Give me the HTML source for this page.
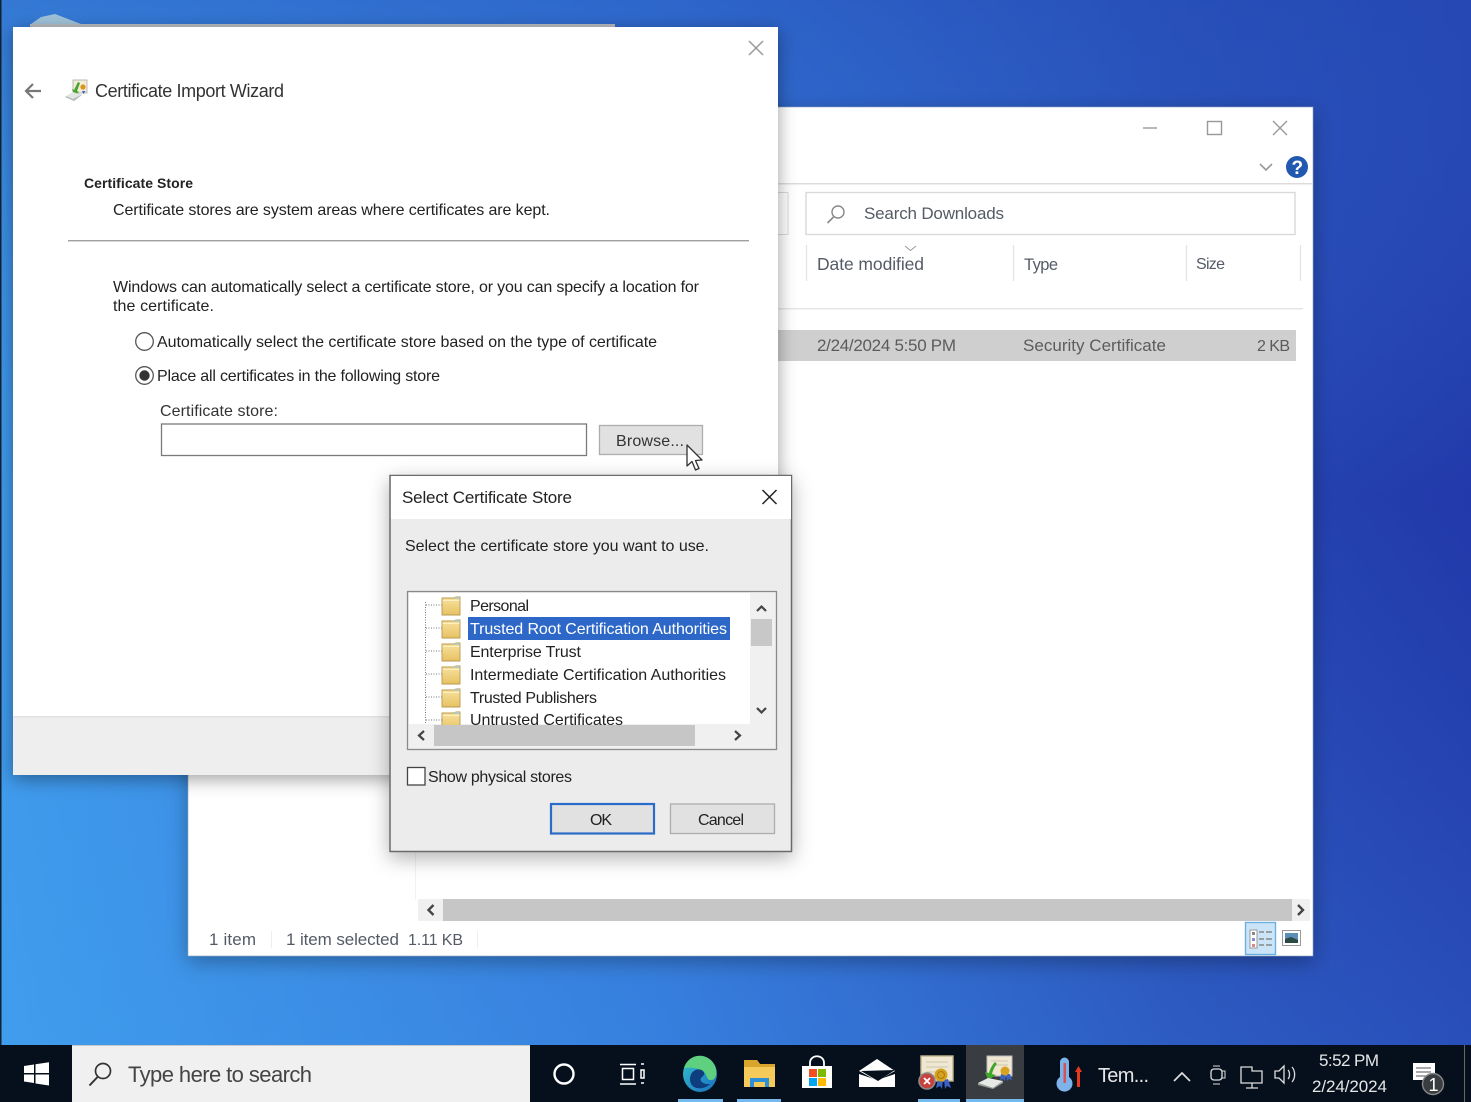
<!DOCTYPE html>
<html lang="en"><head><meta charset="utf-8"><title>Certificate Import Wizard</title>
<style>
html,body{margin:0;padding:0;width:1471px;height:1102px;overflow:hidden;background:#2b5cc8}
svg{display:block;position:absolute;left:0;top:0;filter:blur(.3px)}
text{font-family:"Liberation Sans",sans-serif;font-size:16px;fill:#222}
.g{fill:#5c5c5c}.h{fill:#555b66}.b{fill:#333}
</style></head><body>
<svg width="1471" height="1102" viewBox="0 0 1471 1102" xmlns="http://www.w3.org/2000/svg">
<defs>
<linearGradient id="bg1" x1="0" y1="0" x2="1" y2="0"><stop offset="0" stop-color="#3f9bec"/><stop offset=".45" stop-color="#3272d6"/><stop offset=".8" stop-color="#2440ae"/><stop offset="1" stop-color="#1f2fa4"/></linearGradient>
<linearGradient id="bg2" x1="0" y1="0" x2="0" y2="1"><stop offset="0" stop-color="#2a5cc0" stop-opacity=".55"/><stop offset=".45" stop-color="#3d8fe6" stop-opacity=".1"/><stop offset="1" stop-color="#44a4f2" stop-opacity=".3"/></linearGradient>
<linearGradient id="fold" x1="0" y1="0" x2="0" y2="1"><stop offset="0" stop-color="#f8e3a0"/><stop offset="1" stop-color="#e6c163"/></linearGradient>
<linearGradient id="edge" x1="0" y1="0" x2="1" y2="1"><stop offset="0" stop-color="#35c1c9"/><stop offset="1" stop-color="#1a6fc4"/></linearGradient>
<filter id="sh" x="-10%" y="-10%" width="120%" height="120%"><feDropShadow dx="0" dy="4" stdDeviation="9" flood-color="#000" flood-opacity=".38"/></filter>
<filter id="sh2" x="-20%" y="-20%" width="140%" height="140%"><feDropShadow dx="0" dy="6" stdDeviation="10" flood-color="#000" flood-opacity=".3"/></filter>
<g id="folder"><path d="M1 3h12l2-1h4v18H1z" fill="url(#fold)" stroke="#b99a4e" stroke-width=".9"/><path d="M1.500 5.500h17" stroke="#fff0c0"/><rect x="14" y="2" width="4" height="2" fill="#a9ccd2"/></g>
</defs>
<rect width="1471" height="1102" fill="url(#bg1)"/>
<rect width="1471" height="1102" fill="url(#bg2)"/>
<rect x="0" y="0" width="1.500" height="1046" fill="#123"/>

<!-- behind window top strip -->
<path d="M31 24l10-7 14-3 26 10z" fill="#9fc2d8"/>
<rect x="30" y="24" width="585" height="4" fill="#b9bdc2"/>

<!-- explorer -->
<rect x="188" y="107" width="1125" height="849" fill="#fff" stroke="#8da0b8" stroke-width=".6" filter="url(#sh2)"/>
<path d="M1143 128h14" stroke="#999" stroke-width="1.400"/>
<rect x="1207.500" y="121.500" width="14" height="13" fill="none" stroke="#999" stroke-width="1.400"/>
<path d="M1273 121l14 14M1287 121l-14 14" stroke="#999" stroke-width="1.400"/>
<path d="M1260 164l6 6 6-6" fill="none" stroke="#999" stroke-width="1.600"/>
<circle cx="1297" cy="167" r="11" fill="#2159b0"/>
<text x="1291.500" y="174" style="font-size:19px;font-weight:bold;fill:#fff">?</text>
<rect x="778" y="183" width="535" height="1.500" fill="#dcdcdc"/>
<rect x="770" y="192.500" width="18" height="42" fill="#fff" stroke="#dadada"/>
<rect x="806" y="192.500" width="489" height="42" fill="#fff" stroke="#d9d9d9" stroke-width="1.400"/>
<circle cx="838" cy="212" r="6" fill="none" stroke="#888" stroke-width="1.400"/><path d="M833.500 217l-6 6" stroke="#888" stroke-width="1.600"/>
<text x="864" y="219" textLength="140" class="h" style="font-size:17px">Search Downloads</text>
<path d="M905 246l5.500 4.500 5.500-4.500" fill="none" stroke="#999" stroke-width="1"/>
<path d="M806.500 245v36M1013.500 245v36M1186.500 245v36M1300.500 245v36" stroke="#e4e4e4" stroke-width="1.300"/>
<text x="817" y="270" textLength="107" class="h" style="font-size:17.500px">Date modified</text>
<text x="1024" y="270" textLength="34" class="h" style="font-size:16.500px">Type</text>
<text x="1196" y="269" textLength="29" class="h" style="font-size:16px">Size</text>
<rect x="778" y="308" width="525" height="1.500" fill="#e6e6e6"/>
<rect x="778" y="330" width="518" height="31" fill="#cfcfcf"/>
<text x="817" y="351" textLength="139" class="g" style="font-size:17px">2/24/2024 5:50 PM</text>
<text x="1023" y="351" textLength="143" class="g" style="font-size:17px">Security Certificate</text>
<text x="1257" y="351" textLength="33" class="g" style="font-size:16px">2 KB</text>
<rect x="415" y="775" width="1" height="125" fill="#f2f2f2"/>
<rect x="418" y="899" width="892" height="22" fill="#f0f0f0"/>
<rect x="443" y="899" width="849" height="22" fill="#c6c6c6"/>
<path d="M433.500 905l-5 5 5 5M1298 905l5 5-5 5" fill="none" stroke="#444" stroke-width="2.400"/>
<text x="209" y="945" textLength="47" class="h" style="font-size:17px">1 item</text>
<rect x="271" y="931" width="1" height="17" fill="#eee"/>
<text x="286" y="945" textLength="113" class="h" style="font-size:17px">1 item selected</text>
<text x="408" y="945" textLength="55" class="h" style="font-size:16px">1.11 KB</text>
<rect x="477" y="931" width="1" height="17" fill="#eee"/>
<rect x="1245.500" y="922.500" width="30" height="32" fill="#cce4f7" stroke="#6cb0e0" stroke-width="1.400"/>
<rect x="1250" y="930" width="7" height="18" fill="#fff" stroke="#999"/>
<rect x="1252" y="932" width="3" height="3" fill="#888"/><rect x="1252" y="938" width="3" height="3" fill="#8a8ad8"/><rect x="1252" y="944" width="3" height="3" fill="#d88a8a"/>
<path d="M1259 932h5M1266 932h6M1259 939h5M1266 939h6M1259 945h5M1266 945h6" stroke="#777" stroke-width="1.300"/>
<rect x="1282.500" y="930.500" width="18" height="15" fill="#fff" stroke="#999"/>
<rect x="1285" y="933" width="13" height="10" fill="#5c8fb5"/><path d="M1285 943v-4l6-2 7 3v3z" fill="#2c4a44"/>

<!-- wizard -->
<g filter="url(#sh)"><rect x="13" y="27" width="765" height="748" fill="#fff"/></g>
<rect x="13" y="716" width="765" height="59" fill="#eeeeee"/>
<rect x="13" y="716" width="765" height="1.500" fill="#e2e2e2"/>
<path d="M749 41l14 14M763 41l-14 14" stroke="#999" stroke-width="1.500"/>
<path d="M41 91H26M33 84l-7 7 7 7" fill="none" stroke="#777" stroke-width="2.200"/>
<g transform="translate(64,78)"><rect x="9" y="2" width="14" height="13" fill="#f3ecd8" stroke="#aaa" stroke-width=".8"/><circle cx="19" cy="9" r="2.600" fill="#d9951a"/><path d="M18 13l1.500 3 2-3" fill="#3a62c2"/><path d="M14 4l-4 8-2-1 2 6 5-3-2-1 3-8z" fill="#46a52f"/><path d="M1 19l8-5 9 3-8 6z" fill="#b4bab6"/><path d="M2 18l7-4 8 3-8 4z" fill="#e3e7e4"/></g>
<text x="95" y="97" textLength="189" style="font-size:18px;fill:#333">Certificate Import Wizard</text>
<text x="84" y="188" textLength="109" style="font-size:14px;font-weight:bold">Certificate Store</text>
<text x="113" y="215" textLength="437">Certificate stores are system areas where certificates are kept.</text>
<rect x="68" y="240" width="681" height="1.400" fill="#a0a0a0"/>
<text x="113" y="292" textLength="586">Windows can automatically select a certificate store, or you can specify a location for</text>
<text x="113" y="311" textLength="101">the certificate.</text>
<circle cx="144.500" cy="341.500" r="8.800" fill="#fff" stroke="#555" stroke-width="1.300"/>
<text x="157" y="347" textLength="500">Automatically select the certificate store based on the type of certificate</text>
<circle cx="144.500" cy="375.500" r="8.800" fill="#fff" stroke="#555" stroke-width="1.300"/>
<circle cx="144.500" cy="375.500" r="5.200" fill="#333"/>
<text x="157" y="381" textLength="283">Place all certificates in the following store</text>
<text x="160" y="416" textLength="118" class="b">Certificate store:</text>
<rect x="161.500" y="424" width="425" height="31.500" fill="#fff" stroke="#7a7a7a" stroke-width="1.300"/>
<rect x="599.500" y="425.500" width="103" height="29" fill="#e1e1e1" stroke="#adadad" stroke-width="1.300"/>
<text x="616" y="446" textLength="68" class="b">Browse...</text>

<!-- cursor -->
<path d="M687 445v21l5-4.500 3.500 8.500 3.500-1.500-3.500-8 6.500-.5z" fill="#fff" stroke="#333" stroke-width="1.300" stroke-linejoin="round"/>

<!-- dialog -->
<g filter="url(#sh2)"><rect x="390" y="475.500" width="401.500" height="376" fill="#ececec" stroke="#6a6a6a" stroke-width="1.500"/></g>
<rect x="391" y="476" width="400" height="43" fill="#fff"/>
<text x="402" y="503" textLength="170" style="font-size:17px;fill:#222">Select Certificate Store</text>
<path d="M762.500 490l14 14M776.500 490l-14 14" stroke="#222" stroke-width="1.500"/>
<text x="405" y="551" textLength="304">Select the certificate store you want to use.</text>
<rect x="407.500" y="591.500" width="369" height="158" fill="#f0f0f0" stroke="#8a8a8a" stroke-width="1.300"/>
<rect x="409" y="593" width="341" height="131" fill="#fff"/>
<path d="M425.500 602v122" stroke="#777" stroke-dasharray="1 1.500"/>
<path d="M426 605h17M426 628h17M426 651h17M426 674h17M426 697h17M426 720h17" stroke="#777" stroke-dasharray="1 1.500"/>
<use href="#folder" x="441" y="595"/>
<use href="#folder" x="441" y="618"/>
<use href="#folder" x="441" y="641"/>
<use href="#folder" x="441" y="664"/>
<use href="#folder" x="441" y="687"/>
<svg x="409" y="593" width="341" height="131"><use href="#folder" x="32" y="117"/>
<text x="61" y="132" textLength="153">Untrusted Certificates</text></svg>
<rect x="468" y="617" width="262" height="23" fill="#2d68c8"/>
<text x="470" y="611" textLength="59">Personal</text>
<text x="470" y="634" textLength="257" style="fill:#fff">Trusted Root Certification Authorities</text>
<text x="470" y="657" textLength="111">Enterprise Trust</text>
<text x="470" y="680" textLength="256">Intermediate Certification Authorities</text>
<text x="470" y="703" textLength="127">Trusted Publishers</text>
<rect x="751" y="619" width="21" height="27" fill="#c8c8c8"/>
<path d="M757 611l4.500-4.500 4.500 4.500M757 708l4.500 4.500 4.500-4.500" fill="none" stroke="#444" stroke-width="2.200"/>
<rect x="434" y="725" width="261" height="21" fill="#c6c6c6"/>
<path d="M424 731l-5 4.500 5 4.500M735 731l5 4.500-5 4.500" fill="none" stroke="#444" stroke-width="2.200"/>
<rect x="407.500" y="767.500" width="17.500" height="17.500" fill="#fff" stroke="#444" stroke-width="1.300"/>
<text x="428" y="782" textLength="144">Show physical stores</text>
<rect x="551" y="804" width="103" height="29.500" fill="#e1e1e1" stroke="#2b6bc9" stroke-width="2.200"/>
<text x="590" y="825" textLength="22">OK</text>
<rect x="670.500" y="804" width="104" height="29.500" fill="#e1e1e1" stroke="#adadad" stroke-width="1.300"/>
<text x="698" y="825" textLength="46">Cancel</text>

<!-- taskbar -->
<rect x="0" y="1045" width="1471" height="57" fill="#06101c"/>
<rect x="72" y="1045" width="458" height="57" fill="#f0f0f0"/>
<rect x="72" y="1045" width="458" height="1" fill="#c8c8c8"/>
<path d="M24 1066l10-1.500V1073H24zM35.500 1064.300l13.500-2V1073H35.500zM24 1074.500h10v8.500l-10-1.500zM35.500 1074.500H49v11l-13.500-2z" fill="#fff"/>
<circle cx="103" cy="1071" r="7.500" fill="none" stroke="#333" stroke-width="1.700"/><path d="M97.500 1077l-8 8.500" stroke="#333" stroke-width="2"/>
<text x="128" y="1082" textLength="184" style="font-size:22px;fill:#444">Type here to search</text>
<circle cx="564" cy="1074" r="9.500" fill="none" stroke="#fff" stroke-width="2.400"/>
<path d="M620 1064.500h16M620 1084h16M622.500 1068.500h11v11h-11z" fill="none" stroke="#fff" stroke-width="1.500"/><path d="M641 1064h3M641 1070h3v8h-3zM641 1083h3" fill="none" stroke="#fff" stroke-width="1.500"/>
<!-- edge -->
<ellipse cx="700" cy="1074" rx="17" ry="18" fill="url(#edge)"/>
<path d="M684 1068c5-16 25-16 31-2 2 5 2 13-3 14-6 1-4-5-9-9-5-3-13-4-19-3z" fill="#5fd07f"/>
<path d="M690 1079c0-8 8-12 13-8 3 3 0 5-2 7-2 3 3 7 9 6-5 6-20 7-20-5z" fill="#0e3e7d"/>
<!-- explorer -->
<path d="M744 1060h13l3 4h15v23h-31z" fill="#f4cb5a"/><path d="M744 1060h13l3 4h15v3h-31z" fill="#d9a52c"/>
<path d="M750 1087v-9h19v9h-4v-5h-11v5z" fill="#2d8fd6"/>
<!-- store -->
<path d="M802 1066h30v22h-30z" fill="#fff"/><path d="M810 1066v-3c0-9 14-9 14 0v3" fill="none" stroke="#fff" stroke-width="1.800"/>
<rect x="809" y="1069" width="8" height="8" fill="#f25022"/><rect x="818" y="1069" width="8" height="8" fill="#7fba00"/><rect x="809" y="1078" width="8" height="8" fill="#00a4ef"/><rect x="818" y="1078" width="8" height="8" fill="#ffb900"/>
<!-- mail -->
<path d="M859 1071l18-12 18 12-18 10z" fill="#fff"/><path d="M859 1074l18 6 18-6v13h-36z" fill="#fff"/><path d="M861 1071l34-1-17 11z" fill="#06101c"/>
<!-- cert x -->
<rect x="921" y="1056" width="32" height="25" fill="#efe7d2" stroke="#c2b48e" stroke-width="1.400"/><path d="M926 1062h22M926 1067h22M926 1072h10" stroke="#cfc6ae"/>
<path d="M938 1079l-2 9 4-2 2 3 1-9zM944 1080l1 9 2-3 4 2-3-9z" fill="#3a62c2"/>
<circle cx="941" cy="1075" r="6.500" fill="#d7a21f"/><circle cx="941" cy="1075" r="3.500" fill="none" stroke="#a77a10"/>
<circle cx="927" cy="1081" r="8" fill="#c9413c" stroke="#8a8a8a" stroke-width="1.600"/><path d="M924 1078l6 6M930 1078l-6 6" stroke="#fff" stroke-width="1.800"/>
<!-- active cert -->
<rect x="966" y="1045" width="58" height="57" fill="#393c40"/>
<rect x="987" y="1056" width="25" height="20" fill="#efe7d2" stroke="#bbb"/><path d="M991 1061h17M995 1065h13" stroke="#cfc6ae"/>
<path d="M1001 1074l-1 6 3-1 2 2 1-7zM1006 1074l1 7 2-2 3 1-2-6z" fill="#3a62c2"/><circle cx="1005" cy="1071" r="4.500" fill="#d7a21f"/>
<path d="M995 1062c-3 3-5 7-6 11l-4-1 3 8 8-5-4-1c1-4 3-8 5-10z" fill="#3ea62b"/>
<path d="M978 1083l10-5 15 3-10 7z" fill="#e6e9e6"/><path d="M978 1083l15 5 10-7v2l-10 6-15-4z" fill="#9aa09b"/>
<!-- indicators -->
<rect x="678" y="1099" width="45" height="3" fill="#76b9ed"/><rect x="737" y="1099" width="44" height="3" fill="#76b9ed"/><rect x="918" y="1099" width="42" height="3" fill="#76b9ed"/><rect x="966" y="1099" width="58" height="3" fill="#76b9ed"/>
<!-- tray -->
<path d="M1060 1062a4.500 4.500 0 0 1 9 0v15a8 8 0 1 1-9 0z" fill="#7db2ea"/><rect x="1063.500" y="1063" width="2.500" height="20" fill="#d65353"/>
<path d="M1075 1072l3.500-6 3.500 6h-2v15h-3v-15z" fill="#e8391f"/>
<text x="1098" y="1082" textLength="51" style="font-size:20px;fill:#e6e6e6">Tem...</text>
<path d="M1174 1081l8-8 8 8" fill="none" stroke="#ddd" stroke-width="1.700"/>
<rect x="1211" y="1069" width="11" height="11" rx="3" fill="none" stroke="#ddd" stroke-width="1.300"/><rect x="1222" y="1071" width="3" height="7" fill="none" stroke="#ddd"/><path d="M1213 1066h7M1213 1084h7" stroke="#ddd"/>
<path d="M1241 1067h11v4h10v12h-21zM1252 1083v5M1246 1088h12" fill="none" stroke="#ddd" stroke-width="1.300"/>
<path d="M1275 1071h4l5-5v17l-5-5h-4zM1288 1070c2 2 2 7 0 9M1292 1067c3.500 4 3.500 11 0 15" fill="none" stroke="#ddd" stroke-width="1.300"/>
<text x="1319" y="1066" textLength="60" style="font-size:17px;fill:#e6e6e6">5:52 PM</text>
<text x="1312" y="1092" textLength="75" style="font-size:17px;fill:#e6e6e6">2/24/2024</text>
<path d="M1413 1063h22v17h-7v6l-5-6h-10z" fill="#fff"/><path d="M1416 1068h15M1416 1072h15M1416 1076h11" stroke="#555"/>
<circle cx="1433" cy="1084" r="10.500" fill="#3a3d40" stroke="#888" stroke-width="1.400"/>
<text x="1428.500" y="1091" style="font-size:18px;fill:#fff">1</text>
<rect x="1464" y="1045" width="1" height="57" fill="#666"/>
</svg>
</body></html>
